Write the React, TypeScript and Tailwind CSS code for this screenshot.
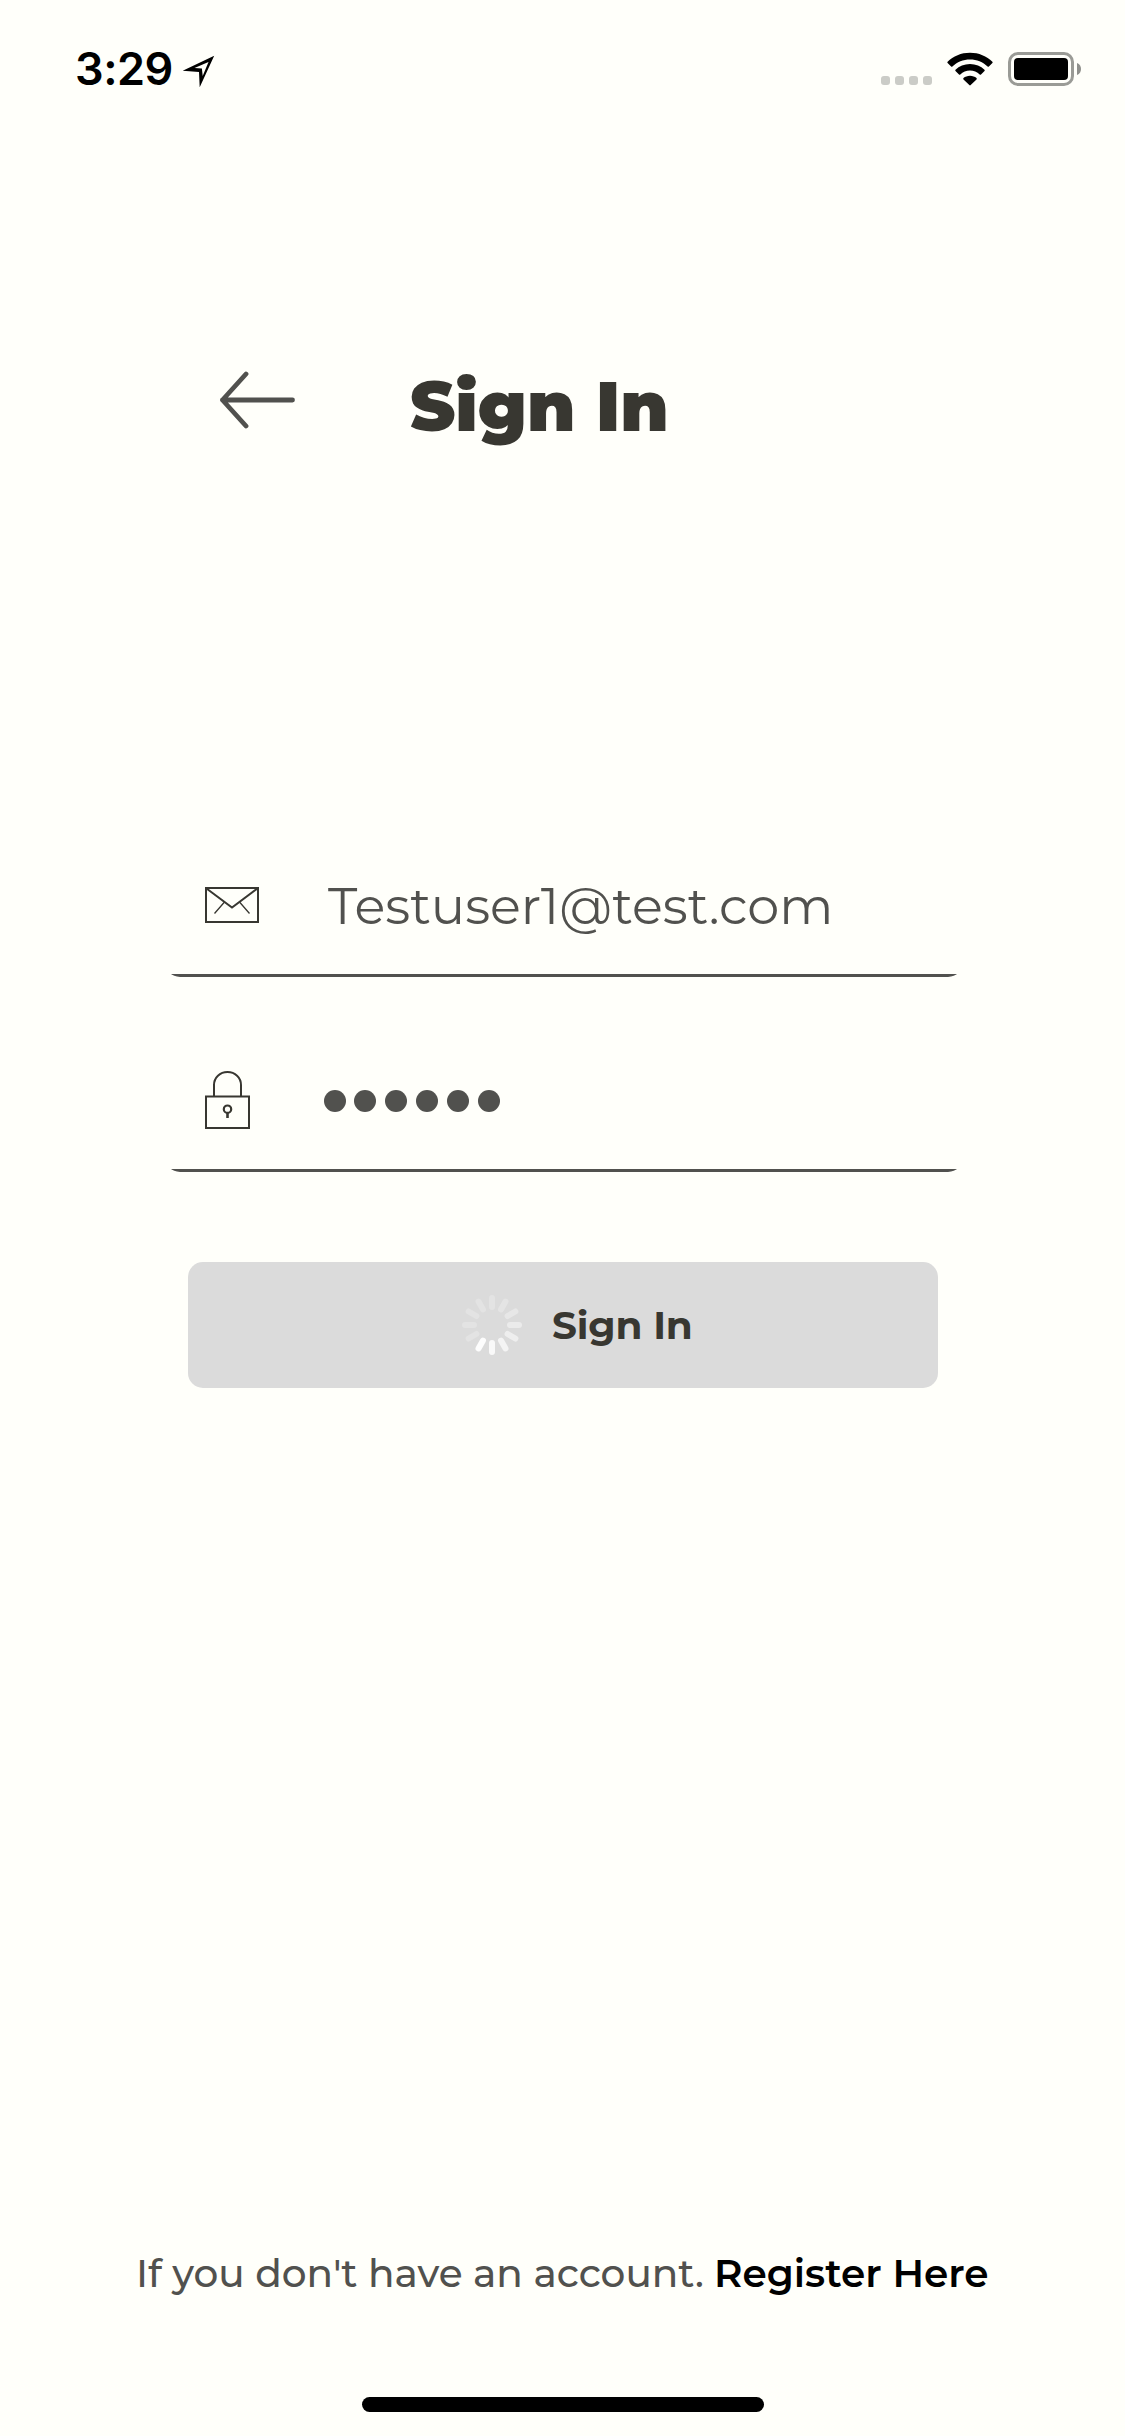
import React from "react";

function StatusBar() {
  return (
    <header className="flex h-[138px] shrink-0 items-center pl-[75px] text-black">
      <span className="mt-[-1px] w-[108px] font-['Inter',sans-serif] text-[45px] font-semibold leading-none tracking-[-0.5px] whitespace-nowrap">3:29</span>
      <svg className="mt-[-4px] h-[36px] w-[34px] overflow-visible" viewBox="0 0 34 36" fill="none">
        <path fillRule="evenodd" fill="#000" d="M31.2 6.8 L16.7 38.3 L16 23 L-0.3 21.7 Z M25.5 13 L11.5 19 L18.9 19.6 L19.7 27 Z" />
      </svg>
      <div className="ml-[664px] mt-[23px] flex gap-[5px]">
        <i className="size-[9px] rounded-[3px] bg-[#cbccc7]" />
        <i className="size-[9px] rounded-[3px] bg-[#cbccc7]" />
        <i className="size-[9px] rounded-[3px] bg-[#cbccc7]" />
        <i className="size-[9px] rounded-[3px] bg-[#cbccc7]" />
      </div>
      <svg className="ml-[15px] h-[34px] w-[46px]" viewBox="0 0 46 34" fill="#000">
        <path d="M23 0.8 C31.8 0.8 39.8 4.2 45.4 9.8 C45.8 10.2 45.8 10.7 45.4 11.1 L41.9 14.5 C41.5 14.9 41 14.9 40.6 14.5 C36 10.1 29.8 7.5 23 7.5 C16.2 7.5 10 10.1 5.4 14.5 C5 14.9 4.5 14.9 4.1 14.5 L0.6 11.1 C0.2 10.7 0.2 10.2 0.6 9.8 C6.2 4.2 14.2 0.8 23 0.8 Z" />
        <path d="M23 12 C28.7 12 33.8 14.2 37.5 17.8 C37.9 18.2 37.9 18.7 37.5 19.1 L34 22.5 C33.6 22.9 33.1 22.9 32.7 22.5 C30.1 20.1 26.7 18.6 23 18.6 C19.3 18.6 15.9 20.1 13.3 22.5 C12.9 22.9 12.4 22.9 12 22.5 L8.5 19.1 C8.1 18.7 8.1 18.2 8.5 17.8 C12.2 14.2 17.3 12 23 12 Z" />
        <path d="M23 23.8 C25.6 23.8 27.8 24.7 29.5 26.1 C29.9 26.5 29.9 27 29.5 27.4 L23.7 33.1 C23.3 33.5 22.7 33.5 22.3 33.1 L16.5 27.4 C16.1 27 16.1 26.5 16.5 26.1 C18.2 24.7 20.4 23.8 23 23.8 Z" />
      </svg>
      <svg className="ml-[15px] h-[34px] w-[74px]" viewBox="0 0 74 34">
        <rect x="1.5" y="1.5" width="63" height="31" rx="8.5" fill="none" stroke="#9a9b96" strokeWidth="3" />
        <rect x="6" y="6" width="54" height="22" rx="4" fill="#000" />
        <path d="M69 11 C72 12 73 14.5 73 17 C73 19.5 72 22 69 23 Z" fill="#8f908c" />
      </svg>
    </header>
  );
}

function EnvelopeIcon() {
  return (
    <svg className="h-[36px] w-[54px]" viewBox="0 0 54 36" fill="none" stroke="#383731" strokeWidth="2">
      <rect x="1" y="1" width="52" height="34" />
      <path d="M1.5 1.5 L27 20.5 L52.5 1.5" />
      <path d="M19.5 15 L9.5 26.5 M34.5 15 L44.5 26.5" strokeWidth="1.3" />
    </svg>
  );
}

function LockIcon() {
  return (
    <svg className="h-[60px] w-[45px]" viewBox="0 0 45 60" fill="none" stroke="#383731" strokeWidth="2">
      <rect x="1" y="26.5" width="43" height="31.5" />
      <path d="M9 26 V15 C9 7.5 15 2 22.5 2 C30 2 36 7.5 36 15 V26" />
      <circle cx="22.5" cy="39.2" r="3.7" strokeWidth="2.2" />
      <path d="M22.5 43 V48" strokeWidth="2.6" />
    </svg>
  );
}

function Field({ icon, children }: { icon: React.ReactNode; children: React.ReactNode }) {
  return (
    <div className="flex h-[141px] w-[798px] flex-col overflow-hidden rounded-[15px]">
      <div className="flex flex-1 items-center pl-[40px]">
        <div className="flex w-[119px] items-center">{icon}</div>
        {children}
      </div>
      <div className="h-[3px] bg-[#51514e]" />
    </div>
  );
}

const petals = [0.23, 0.26, 0.34, 0.44, 0.54, 0.68, 0.82, 0.93, 0.22, 0.22, 0.22, 0.22];

function Spinner() {
  return (
    <svg className="size-[60px]" viewBox="-30 -30 60 60">
      {petals.map((opacity, i) => (
        <rect key={i} x="-3" y="-30" width="6" height="15" rx="3" fill="#fff" opacity={opacity} transform={`rotate(${i * 30})`} />
      ))}
    </svg>
  );
}

export default function App() {
  return (
    <div className="flex h-[2436px] w-[1125px] flex-col overflow-hidden bg-[#fffffa] font-['Montserrat','Inter',sans-serif]">
      <StatusBar />
      <div className="mt-[228px] flex h-[80px] shrink-0 items-center pl-[217px]">
        <svg className="mt-[-12px] h-[60px] w-[80px]" viewBox="0 0 80 60" fill="none" stroke="#51514e" strokeWidth="4.8" strokeLinecap="round" strokeLinejoin="round">
          <path d="M75.5 30 H5.5 M29 4 L5.5 30 L29 56" />
        </svg>
        <h1 className="ml-[113px] text-[69px] font-black leading-none text-[#383731] whitespace-nowrap">Sign In</h1>
      </div>
      <form className="mt-[390px] flex shrink-0 flex-col pl-[165px]">
        <Field icon={<EnvelopeIcon />}>
          <span className="ml-[4px] mt-[2px] text-[51px] leading-none text-[#51514e] whitespace-nowrap">Testuser1@test.com</span>
        </Field>
        <div className="h-[54px]" />
        <Field icon={<LockIcon />}>
          <div className="mt-[2px] flex gap-[9px]">
            <i className="mr-[-1px] size-[22px] rounded-full bg-[#51514e]" />
            <i className="size-[22px] rounded-full bg-[#51514e]" />
            <i className="size-[22px] rounded-full bg-[#51514e]" />
            <i className="size-[22px] rounded-full bg-[#51514e]" />
            <i className="size-[22px] rounded-full bg-[#51514e]" />
            <i className="size-[22px] rounded-full bg-[#51514e]" />
          </div>
        </Field>
        <button type="button" className="ml-[23px] mt-[90px] flex h-[126px] w-[750px] items-center rounded-[15px] bg-[#dbdbdb] pl-[274px]">
          <Spinner />
          <span className="ml-[30px] text-[39px] font-bold leading-none tracking-[-0.15px] text-[#383731] whitespace-nowrap">Sign In</span>
        </button>
      </form>
      <footer className="mt-[860px] flex shrink-0 flex-col">
        <p className="flex h-[51px] items-center pl-[136px] text-[39px] leading-none whitespace-nowrap">
          <span className="w-[578px] font-medium text-[#51514e]">If you don't have an account.</span>
          <a className="font-semibold text-black">Register Here</a>
        </p>
        <div className="ml-[362px] mt-[98px] h-[15px] w-[402px] rounded-full bg-black" />
      </footer>
    </div>
  );
}
